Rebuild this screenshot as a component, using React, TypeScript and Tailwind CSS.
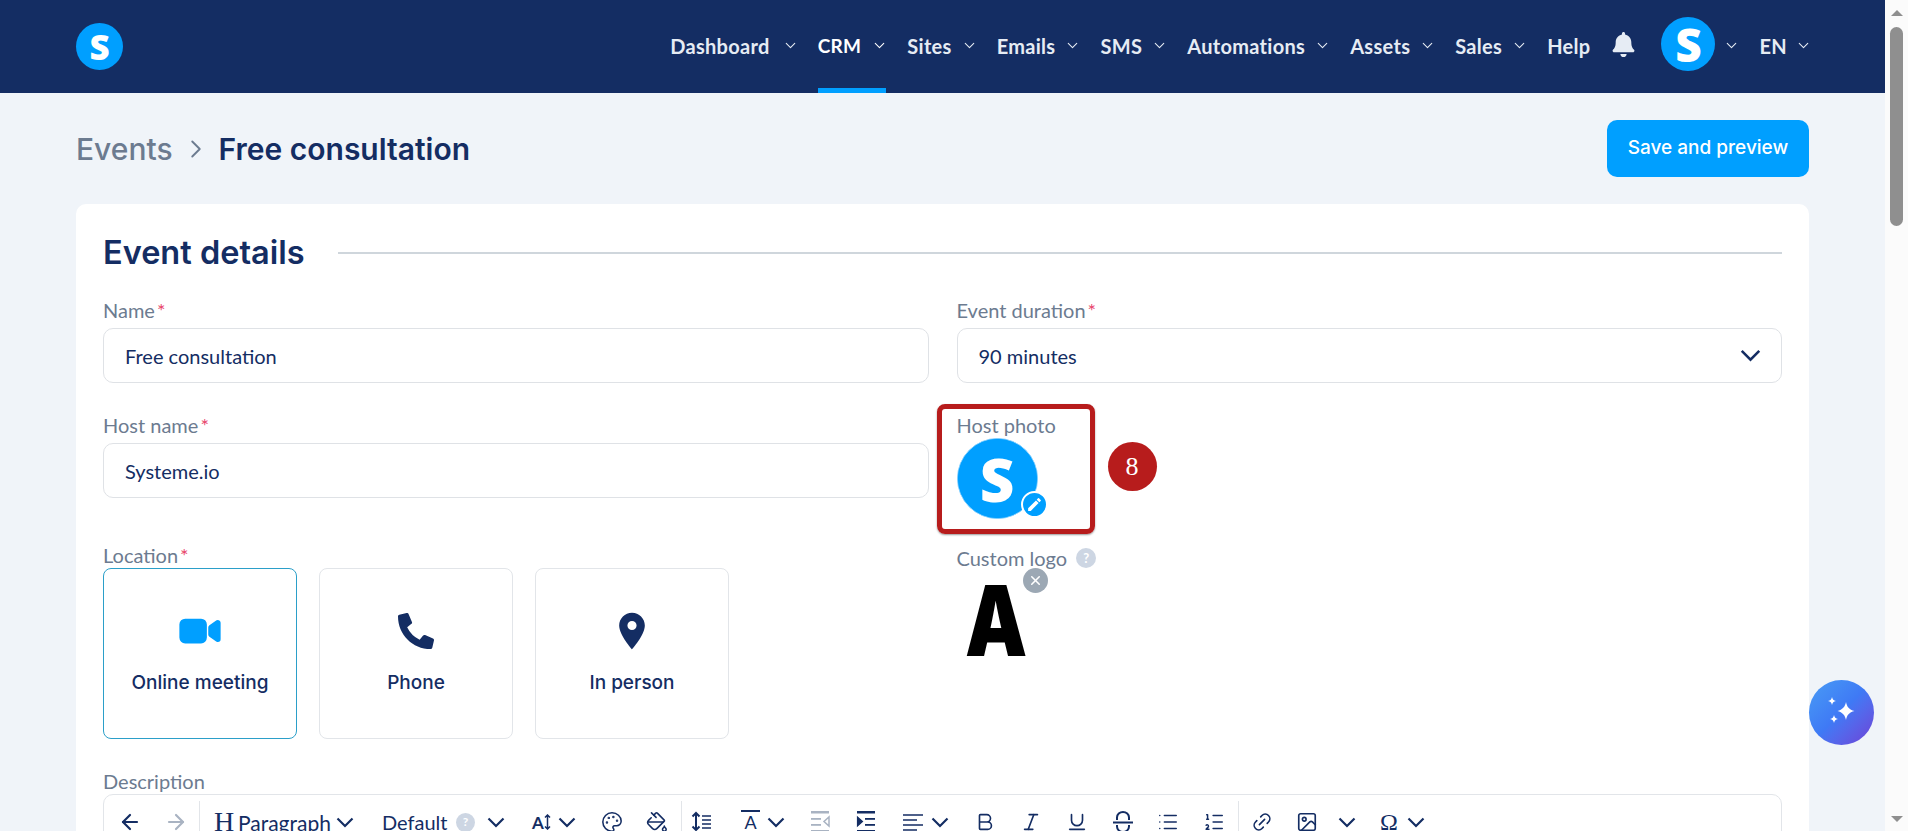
import { ArrowLeft, ArrowRight, Bold, ChevronDown, ChevronRight, Image, Italic, Link2, List, ListOrdered, Palette, PaintBucket, Underline, X } from 'lucide-react'
import { FaBell, FaPhoneAlt } from 'react-icons/fa'
import { IoVideocam } from 'react-icons/io5'
import { MdEdit, MdLocationOn } from 'react-icons/md'

const navItems = [
  { label: 'Dashboard', menu: true, chevClass: 'ml-[12px]', textClass: 'text-[20px]' },
  { label: 'CRM', menu: true, active: true, chevClass: 'ml-[10px]', textClass: 'text-[19px]' },
  { label: 'Sites', menu: true, chevClass: 'ml-[9px]', textClass: 'text-[20px]' },
  { label: 'Emails', menu: true, chevClass: 'ml-[9px]', textClass: 'text-[20px]' },
  { label: 'SMS', menu: true, chevClass: 'ml-[9px]', textClass: 'text-[20px]' },
  { label: 'Automations', menu: true, chevClass: 'ml-[9px]', textClass: 'text-[20px]' },
  { label: 'Assets', menu: true, chevClass: 'ml-[9px]', textClass: 'text-[20px]' },
  { label: 'Sales', menu: true, chevClass: 'ml-[9px]', textClass: 'text-[20px]' },
  { label: 'Help', menu: false, chevClass: '', textClass: 'text-[20px]' },
]

function LogoCircle({ className, textClass }: { className: string; textClass: string }) {
  return (
    <div className={`flex shrink-0 items-center justify-center rounded-full bg-[#009fff] ${className}`}>
      <span className={`[font-family:'Open_Sans',sans-serif] font-extrabold leading-none text-white ${textClass}`}>S</span>
    </div>
  )
}

function Chev({ className = '' }: { className?: string }) {
  return (
    <svg width="18" height="11" viewBox="0 0 18 11" fill="none" className={`shrink-0 ${className}`}>
      <path d="M1.5 1.5 9 9l7.5-7.5" stroke="#142d63" strokeWidth="2.2" />
    </svg>
  )
}

function Required() {
  return <span className="ml-[2px] text-[#e8456b]">*</span>
}

function Label({ children }: { children: React.ReactNode }) {
  return <div className="h-[24px] text-[20px] leading-[24px] text-[#6c7b90]">{children}</div>
}

function Field({ children }: { children: React.ReactNode }) {
  return (
    <div className="flex h-[55px] items-center justify-between rounded-[10px] border border-[#dfe2e6] pl-[21px] pr-[20px] text-[20px] text-[#142d63]">
      {children}
    </div>
  )
}

function IndentIcon({ out }: { out?: boolean }) {
  const color = out ? '#a9b3c2' : '#142d63'
  return (
    <svg width="22" height="24" viewBox="0 0 22 24" className="shrink-0">
      <rect x="2" y="1" width="18" height="2.5" fill={color} />
      <rect x="2" y="20" width="18" height="2.5" fill={color} />
      {out ? (
        <>
          <rect x="2" y="8" width="10" height="1.8" fill={color} />
          <rect x="2" y="14" width="10" height="1.8" fill={color} />
          <path d="M20 7v9l-5-4.5z" fill="none" stroke={color} strokeWidth="1.5" />
        </>
      ) : (
        <>
          <rect x="10" y="8" width="10" height="1.8" fill={color} />
          <rect x="10" y="14" width="10" height="1.8" fill={color} />
          <path d="M2.5 7v9l5-4.5z" fill={color} stroke={color} strokeWidth="1.2" />
        </>
      )}
    </svg>
  )
}

function LineHeightIcon() {
  return (
    <svg width="22" height="24" viewBox="0 0 22 24" fill="none" stroke="#142d63" className="shrink-0">
      <path d="M6 3v17M2.5 6.5 6 3l3.5 3.5M2.5 16.5 6 20l3.5-3.5" strokeWidth="2" />
      <path d="M12 6h9M12 10h9M12 14h9M12 18h9" strokeWidth="1.4" />
    </svg>
  )
}

function AlignIcon() {
  return (
    <svg width="22" height="20" viewBox="0 0 22 20" fill="none" stroke="#142d63" strokeWidth="1.5" className="shrink-0">
      <path d="M1 3h20M1 8h14M1 13h20M1 18h14" />
    </svg>
  )
}

function StrikeIcon() {
  return (
    <svg width="22" height="24" viewBox="0 0 22 24" fill="none" stroke="#142d63" strokeWidth="2" className="shrink-0">
      <path d="M5 10V7.500a6 5.500 0 0 1 12 0V10M1 12.500h20M5 15v1.500a6 5.500 0 0 0 12 0V15" />
    </svg>
  )
}

function Sparkles() {
  return (
    <svg width="32" height="30" viewBox="0 0 32 30" fill="white" className="-mt-[3px]">
      <path d="M20 6c1 5 3 7.500 8.500 9-5.500 1.500-7.500 4-8.500 9-1-5-3.500-7.500-8.500-9C16.500 13.500 19 11 20 6z" />
      <path d="M6 1c.5 2.500 1.500 3.500 4 4-2.500.5-3.500 1.500-4 4-.5-2.500-1.500-3.500-4-4 2.500-.5 3.500-1.500 4-4z" />
      <path d="M8 19c.5 2.500 1.500 3.500 4 4-2.500.5-3.500 1.500-4 4-.5-2.500-1.500-3.500-4-4 2.500-.5 3.500-1.500 4-4z" />
    </svg>
  )
}

function LocationCard({ icon, label, selected }: { icon: React.ReactNode; label: string; selected?: boolean }) {
  return (
    <div className={`flex h-[171px] w-[194px] flex-col items-center rounded-[8px] border pt-[42px] ${selected ? 'border-[#2b9fc9]' : 'border-[#e2e5e9]'}`}>
      <div className="flex h-[40px] items-center justify-center">{icon}</div>
      <div className="mt-[20px] [font-family:Inter,sans-serif] text-[19px] font-medium leading-[24px] text-[#142d63]">{label}</div>
    </div>
  )
}

export default function App() {
  return (
    <div className="relative flex h-[831px] overflow-hidden bg-[#fbfbfb] [font-family:Lato,sans-serif]">
      <div className="h-full w-[1885px] shrink-0 bg-[#f0f4f9]">
        {/* Top nav */}
        <header className="flex h-[93px] items-center justify-between bg-[#142d63] pl-[76px] pr-[73px]">
          <LogoCircle className="h-[47px] w-[47px]" textClass="text-[35px]" />
          <div className="flex h-full items-center">
            <nav className="flex h-full items-center gap-[21px]">
              {navItems.map((item) => (
                <div key={item.label} className={`relative flex h-full items-center ${item.active ? 'text-white' : 'text-[#e6ecf4]'}`}>
                  <span className={`-mt-[2px] font-bold leading-none tracking-[0.3px] ${item.textClass}`}>{item.label}</span>
                  {item.menu && <ChevronDown size={17} strokeWidth={1.5} className={`-mr-[2px] -mt-[3px] ${item.chevClass}`} />}
                  {item.active && <div className="absolute bottom-0 left-0 right-0 h-[5px] bg-[#009fff]" />}
                </div>
              ))}
            </nav>
            <FaBell className="ml-[21px] -mt-[4px] text-[25px] text-[#e6ecf4]" />
            <LogoCircle className="ml-[25px] -mt-[5px] h-[54px] w-[54px]" textClass="text-[46px]" />
            <ChevronDown size={17} strokeWidth={1.5} className="ml-[8px] -mt-[3px] text-[#e6ecf4]" />
            <span className="ml-[19px] -mt-[2px] text-[20px] font-bold leading-none tracking-[0.3px] text-[#e6ecf4]">EN</span>
            <ChevronDown size={17} strokeWidth={1.5} className="ml-[8px] -mt-[3px] text-[#e6ecf4]" />
          </div>
        </header>

        <main className="px-[76px]">
          {/* Breadcrumb + save */}
          <div className="flex items-center justify-between pt-[27px]">
            <div className="flex items-center [font-family:Inter,sans-serif] text-[30px] font-semibold leading-[36px]">
              <span className="font-medium text-[#6c7b90]">Events</span>
              <ChevronRight size={30} strokeWidth={1.5} className="mx-[8px] text-[#6c7b90]" />
              <span className="text-[#142d63]">Free consultation</span>
            </div>
            <button className="h-[57px] w-[202px] rounded-[10px] bg-[#009fff] [font-family:Inter,sans-serif] text-[19px] font-medium text-white">
              Save and preview
            </button>
          </div>

          {/* Event details card */}
          <section className="mt-[27px] rounded-[10px] bg-white px-[27px] pt-[31px]">
            <div className="flex h-[36px] items-center">
              <h2 className="[font-family:Inter,sans-serif] text-[32.5px] font-semibold leading-[36px] text-[#142d63]">Event details</h2>
              <div className="ml-[33px] h-[2px] flex-1 bg-[#cfd6dc]" />
            </div>

            <div className="mt-[27px] grid grid-cols-2 gap-x-[28px]">
              {/* Left column */}
              <div>
                <div className="mb-[6px]">
                  <Label>Name<Required /></Label>
                </div>
                <Field>Free consultation</Field>
                <div className="mb-[6px] mt-[30px]">
                  <Label>Host name<Required /></Label>
                </div>
                <Field>Systeme.io</Field>
                <div className="mb-[1px] mt-[45px]">
                  <Label>Location<Required /></Label>
                </div>
                <div className="flex gap-[22px]">
                  <LocationCard selected label="Online meeting" icon={<IoVideocam className="text-[44px] text-[#009fff]" />} />
                  <LocationCard label="Phone" icon={<FaPhoneAlt className="text-[36px] text-[#142d63]" />} />
                  <LocationCard label="In person" icon={<MdLocationOn className="text-[44px] text-[#142d63]" />} />
                </div>
              </div>

              {/* Right column */}
              <div className="relative">
                <div className="mb-[6px]">
                  <Label>Event duration<Required /></Label>
                </div>
                <Field>
                  90 minutes
                  <Chev className="h-[13px] w-[21px]" />
                </Field>
                <div className="mb-[1px] mt-[30px]">
                  <Label>Host photo</Label>
                </div>
                <div className="relative h-[81px] w-[81px]">
                  <LogoCircle className="h-[81px] w-[81px] border border-[#7fcfff] outline outline-1 -outline-offset-2 outline-[#009fff]" textClass="text-[60px]" />
                  <div className="absolute left-[64px] top-[53px] flex h-[27px] w-[27px] items-center justify-center rounded-full border-2 border-white bg-[#009fff]">
                    <MdEdit className="text-[17px] text-white" />
                  </div>
                </div>
                <div className="mt-[27px] flex items-center">
                  <Label>Custom logo</Label>
                  <div className="ml-[9px] flex h-[20px] w-[20px] items-center justify-center rounded-full bg-[#cdd6e3] text-[13px] font-bold leading-none text-white">?</div>
                </div>
                <div className="relative mt-[4px] h-[80px] w-[81px]">
                  <span className="absolute left-[8px] top-[-2px] [font-family:Inter,sans-serif] text-[98px] font-black leading-[98px] text-black [transform:scaleX(0.8)] [transform-origin:left]">A</span>
                  <div className="absolute left-[66px] top-[-6px] flex h-[25px] w-[25px] items-center justify-center rounded-full bg-[#9ca8b4]">
                    <X size={15} strokeWidth={2.5} className="text-white" />
                  </div>
                </div>

                {/* Annotation */}
                <div className="absolute left-[-20px] top-[106px] h-[130px] w-[158px] rounded-[8px] border-[5px] border-[#b71c1c] shadow-[0_1px_2px_rgba(0,0,0,0.4)]" />
                <div className="absolute left-[151px] top-[144px] flex h-[49px] w-[49px] items-center justify-center rounded-full bg-[#b71c1c] [font-family:'Liberation_Serif',serif] text-[26px] leading-none text-white">8</div>
              </div>
            </div>

            {/* Description editor */}
            <div className="mb-[1px] mt-[30px]">
              <Label>Description</Label>
            </div>
            <div className="rounded-[10px] border border-[#e2e5e9] text-[#142d63]">
              <div className="flex h-[54px] items-center pl-[3px]">
                <div className="flex w-[46px] justify-center"><ArrowLeft size={24} strokeWidth={2.2} /></div>
                <div className="flex w-[46px] justify-center text-[#a9b3c2]"><ArrowRight size={24} strokeWidth={2.2} /></div>
                <div className="mt-[6px] h-[48px] w-px bg-[#e2e5e9]" />
                <span className="ml-[14px] w-[19px] [font-family:'Liberation_Serif',serif] text-[28px] leading-none">H</span>
                <span className="ml-[5px] w-[93px] text-[21px] leading-none">Paragraph</span>
                <Chev className="ml-[5px]" />
                <span className="ml-[28px] w-[64px] text-[20px] leading-none">Default</span>
                <div className="ml-[10px] flex h-[19px] w-[19px] items-center justify-center rounded-full bg-[#cdd6e3] text-[12px] font-bold leading-none text-white">?</div>
                <Chev className="ml-[12px]" />
                <span className="ml-[27px] flex w-[20px] items-center text-[17px] font-bold leading-none">
                  A
                  <svg width="7" height="16" viewBox="0 0 7 16" fill="none" stroke="#142d63" strokeWidth="1.500"><path d="M3.500 1v14M1 3.500 3.500 1 6 3.500M1 12.500 3.500 15 6 12.500" /></svg>
                </span>
                <Chev className="ml-[6px]" />
                <Palette size={22} strokeWidth={1.7} className="ml-[25px] shrink-0" />
                <PaintBucket size={22} strokeWidth={1.7} className="ml-[23px] shrink-0" />
                <div className="ml-[13px] mt-[6px] h-[48px] w-px bg-[#e2e5e9]" />
                <div className="ml-[8px]"><LineHeightIcon /></div>
                <span className="ml-[29px] w-[19px] border-y-2 border-[#142d63] text-center text-[18px] leading-[20px]">A</span>
                <Chev className="ml-[7px]" />
                <div className="ml-[24px]"><IndentIcon out /></div>
                <div className="ml-[24px]"><IndentIcon /></div>
                <div className="ml-[25px]"><AlignIcon /></div>
                <Chev className="ml-[7px]" />
                <Bold size={22} strokeWidth={1.8} className="ml-[25px] shrink-0" />
                <Italic size={22} strokeWidth={1.8} className="ml-[24px] shrink-0" />
                <Underline size={22} strokeWidth={1.8} className="ml-[24px] shrink-0" />
                <div className="ml-[24px]"><StrikeIcon /></div>
                <List size={22} strokeWidth={1.6} className="ml-[23px] shrink-0" />
                <ListOrdered size={22} strokeWidth={1.6} className="ml-[24px] shrink-0" />
                <div className="ml-[13px] mt-[6px] h-[48px] w-px bg-[#e2e5e9]" />
                <Link2 size={22} strokeWidth={1.8} className="ml-[12px] shrink-0 -rotate-45" />
                <Image size={22} strokeWidth={1.8} className="ml-[23px] shrink-0" />
                <Chev className="ml-[20px]" />
                <span className="ml-[22px] w-[22px] text-center [font-family:'Liberation_Serif',serif] text-[24px] leading-none">Ω</span>
                <Chev className="ml-[7px]" />
              </div>
              <div className="h-[200px]" />
            </div>
          </section>
        </main>
      </div>

      {/* Floating assistant button */}
      <button className="absolute left-[1809px] top-[680px] flex h-[65px] w-[65px] items-center justify-center rounded-full bg-gradient-to-br from-[#4a9cf5] via-[#3f79f5] to-[#6a3fd6]">
        <Sparkles />
      </button>

      {/* Page scrollbar */}
      <div className="relative flex w-[23px] flex-col items-center bg-[#fbfbfb] pt-[10px]">
        <div className="h-0 w-0 border-x-[6px] border-b-[6px] border-x-transparent border-b-[#8f8f8f]" />
        <div className="mt-[11px] h-[199px] w-[13px] rounded-full bg-[#8f8f8f]" />
        <div className="absolute bottom-[9px] h-0 w-0 border-x-[6px] border-t-[6px] border-x-transparent border-t-[#8f8f8f]" />
      </div>
    </div>
  )
}
